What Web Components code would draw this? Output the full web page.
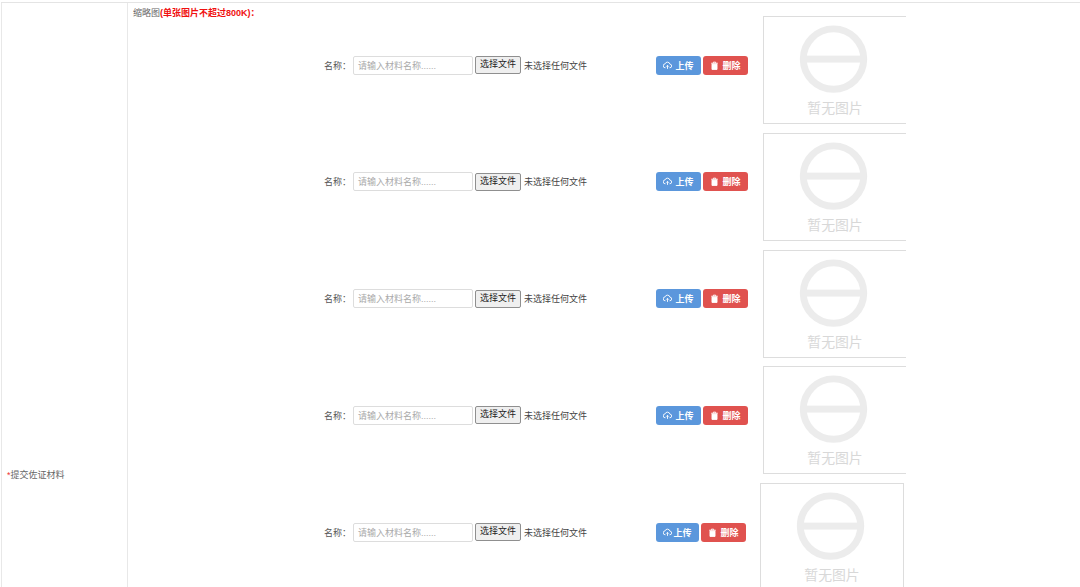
<!DOCTYPE html>
<html lang="zh">
<head>
<meta charset="utf-8">
<title>提交佐证材料</title>
<style>
    html, body { margin: 0; height: 587px; overflow: hidden; background: #fff; }
    body { font-family: "Liberation Sans", "Noto Sans CJK SC", sans-serif; font-size: 9px; color: #555; }
</style>
</head>
<body>
<evidence-form>
    <material-row></material-row>
    <material-row></material-row>
    <material-row></material-row>
    <material-row></material-row>
    <material-row last></material-row>
</evidence-form>

<script>
const formTemplate = document.createElement('template');
formTemplate.innerHTML = `
    <style>
        :host {
            display: grid;
            grid-template-columns: 127px 1fr;
            height: 585px;
            margin: 2px 0 0 1px;
            border-top: 1px solid #e4e4e4;
            overflow: hidden;
        }

        .label {
            display: flex;
            align-items: center;
            padding: 358px 0 0 5px;
            height: 227px;
            border-left: 1px solid #e8e8e8;
            border-right: 1px solid #e8e8e8;
            color: #666;
        }

        .label b { color: #e33; font-weight: normal; }

        .content { padding: 4px 0 0 5px; }

        h2 {
            margin: 0;
            height: 9px;
            line-height: 12px;
            font-size: 9px;
            font-weight: normal;
            color: #666;
        }

        h2 strong { color: #f01010; }
    </style>
    <div class="label"><span><b>*</b>提交佐证材料</span></div>
    <div class="content">
        <h2>缩略图<strong>(单张图片不超过800K)：</strong></h2>
        <slot></slot>
    </div>
`;

class EvidenceForm extends HTMLElement {
    constructor() {
        super();
        this.attachShadow({ mode: 'open' });
        this.shadowRoot.appendChild(formTemplate.content.cloneNode(true));
    }
}

const rowTemplate = document.createElement('template');
rowTemplate.innerHTML = `
    <style>
        :host {
            display: flex;
            height: 116.75px;
            align-items: flex-start;
            color: #555;
        }

        .controls {
            display: flex;
            align-items: center;
            height: 20px;
            margin: 39px 0 0 191px;
        }

        .name { width: 29px; color: #555; }

        .input {
            box-sizing: border-box;
            width: 120px;
            height: 19px;
            padding-left: 4px;
            border: 1px solid #ddd;
            border-radius: 2px;
            line-height: 18px;
            color: #aaa;
        }

        .file-btn {
            box-sizing: border-box;
            width: 46px;
            height: 18px;
            margin-left: 2px;
            border: 1px solid #8f8f8f;
            border-radius: 2px;
            background: #efefef;
            color: #222;
            line-height: 15px;
            text-align: center;
        }

        .file-name { width: 70px; margin-left: 3px; color: #444; }

        .buttons {
            display: flex;
            gap: 2px;
            margin: 0 0 0 62px;
        }

        .btn {
            display: flex;
            align-items: center;
            justify-content: center;
            gap: 3px;
            width: 45px;
            height: 19px;
            border-radius: 3px;
            color: #fff;
            font-weight: bold;
        }

        .btn svg { width: 9px; height: 9px; fill: none; stroke: currentColor; stroke-width: 1.6; }
        .upload { background: #5b97dc; }
        .delete { background: #e0524f; }

        .thumb {
            box-sizing: border-box;
            flex: none;
            width: 143px;
            height: 108px;
            margin-left: 15px;
            border-top: 1px solid #ddd;
            border-left: 1px solid #ddd;
            border-bottom: 1px solid #ddd;
        }

        .thumb svg { display: block; width: 100%; height: 100%; }
        .thumb text { font-size: 14px; fill: #d8d8d8; font-family: "Noto Sans CJK SC", sans-serif; }

        :host([last]) .buttons { margin-left: 62px; }
        :host([last]) .btn.upload { width: 43px; gap: 1px; }
        :host([last]) .btn.delete { width: 45px; }
        :host([last]) .thumb {
            width: 144px;
            height: 108px;
            margin-left: 14px;
            border: 1px solid #ddd;
        }
    </style>
    <div class="controls">
        <span class="name">名称：</span>
        <span class="input">请输入材料名称......</span>
        <span class="file-btn">选择文件</span>
        <span class="file-name">未选择任何文件</span>
        <div class="buttons">
            <div class="btn upload">
                <svg viewBox="0 0 16 16"><path d="M4.5 12H4a3.4 3.4 0 0 1-.4-6.8 4.5 4.5 0 0 1 8.7.4A3.2 3.2 0 0 1 12 12h-.5"/><path d="M8 14V8M5.7 10 8 7.7 10.300 10"/></svg>
                <span>上传</span>
            </div>
            <div class="btn delete">
                <svg viewBox="0 0 16 16"><path d="M2 4h12M6 4V2h4v2" /><path d="M3.500 5.500h9V15h-9z" fill="currentColor"/></svg>
                <span>删除</span>
            </div>
        </div>
    </div>
    <div class="thumb">
        <svg viewBox="0 0 142 107">
            <circle cx="69.500" cy="42.500" r="30.500" fill="none" stroke="#ececec" stroke-width="7"/>
            <rect x="36" y="39" width="67" height="7" fill="#ececec"/>
            <text x="71" y="97" text-anchor="middle">暂无图片</text>
        </svg>
    </div>
`;

class MaterialRow extends HTMLElement {
    constructor() {
        super();
        this.attachShadow({ mode: 'open' });
        this.shadowRoot.appendChild(rowTemplate.content.cloneNode(true));
    }
}

customElements.define('evidence-form', EvidenceForm);
customElements.define('material-row', MaterialRow);
</script>
</body>
</html>
